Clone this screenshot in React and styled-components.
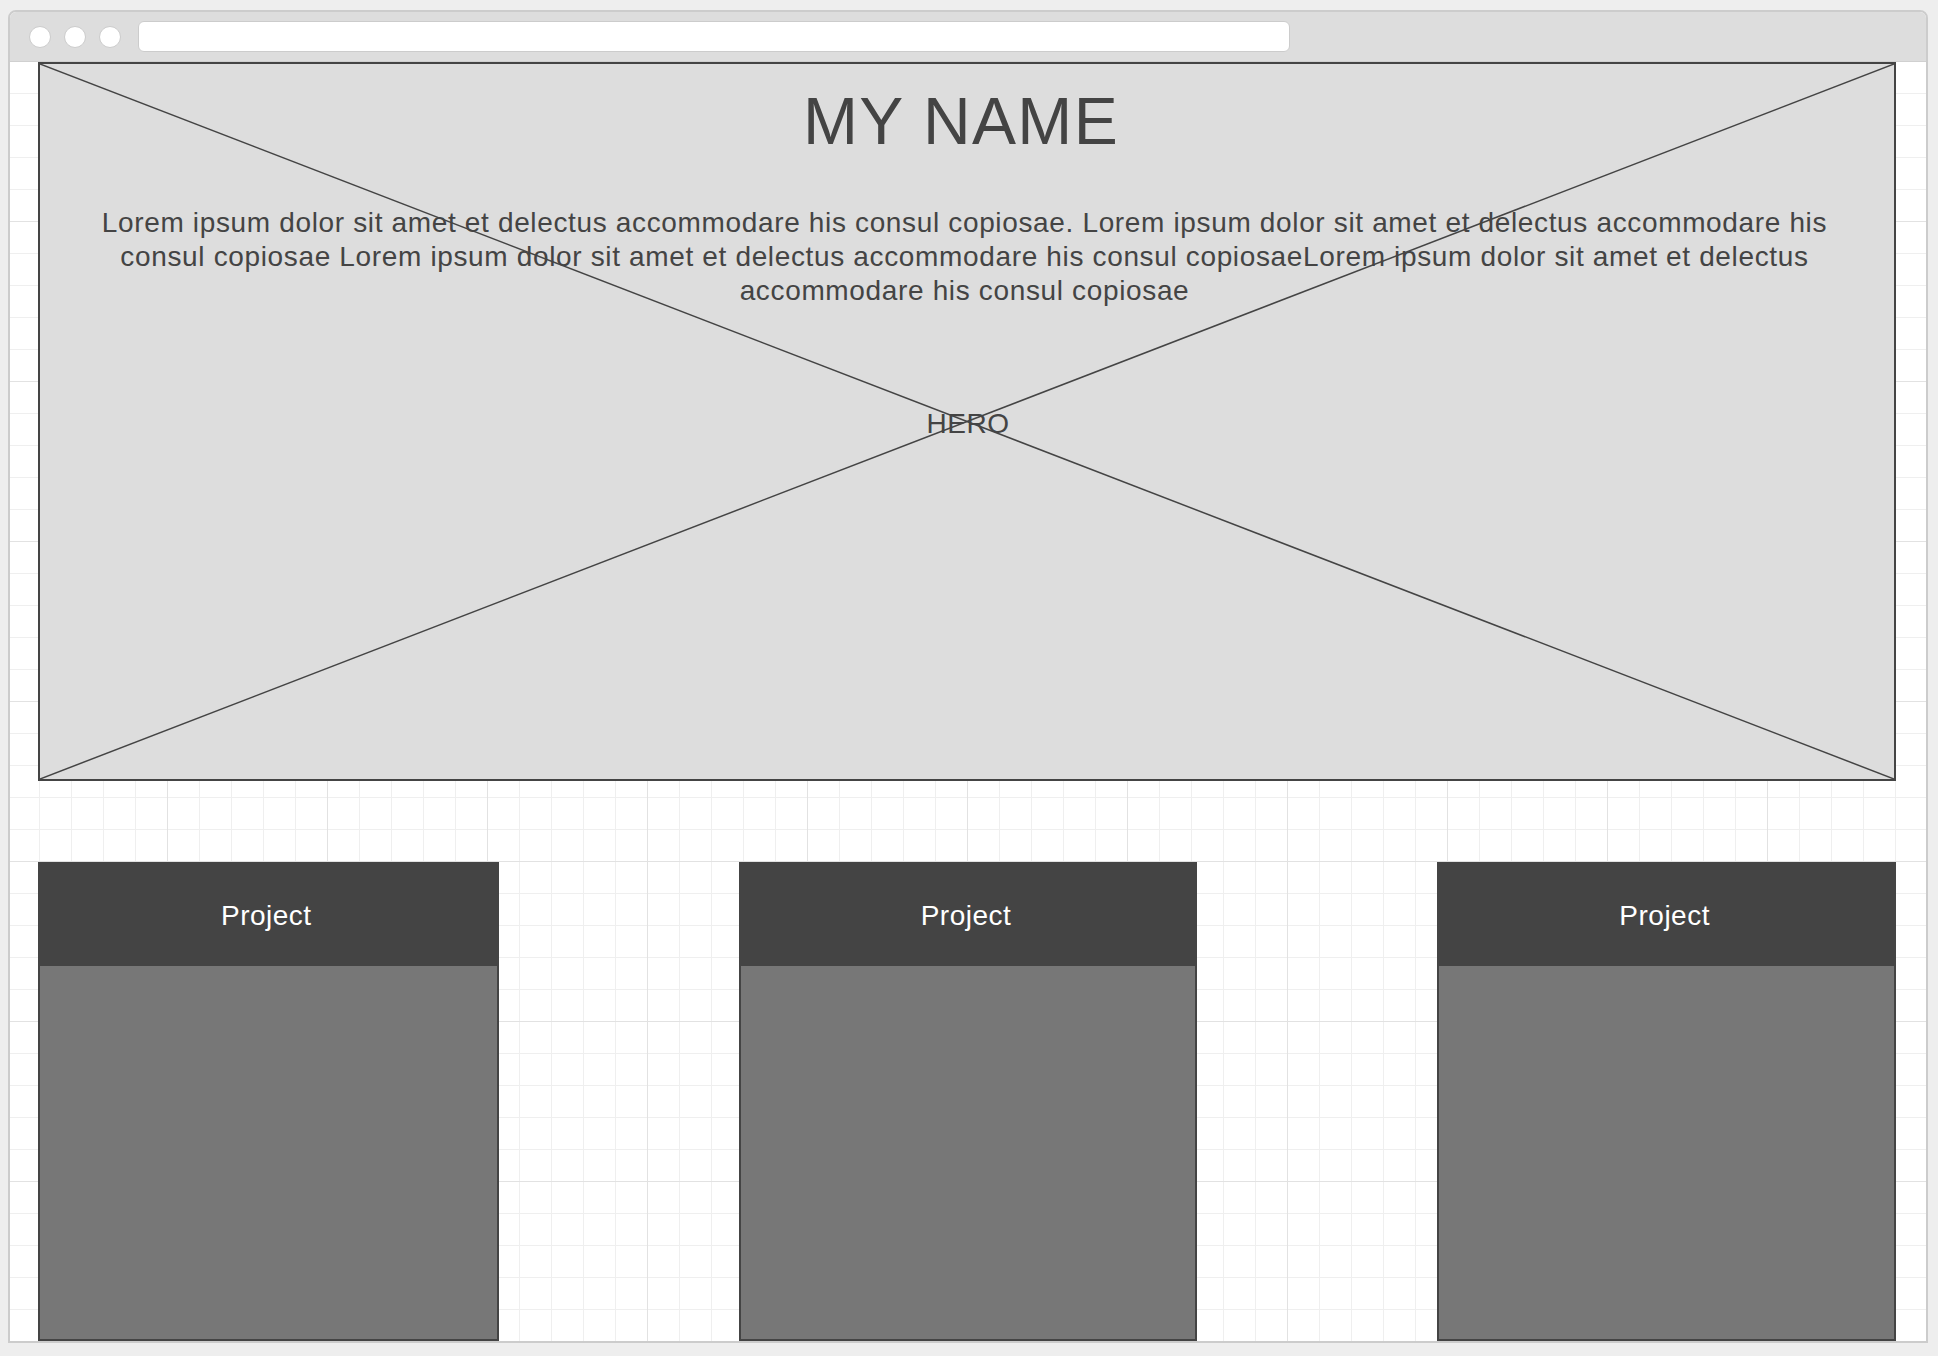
import React from "react";
import styled, { createGlobalStyle } from "styled-components";

const GlobalStyle = createGlobalStyle`
  html, body {
    margin: 0;
    padding: 0;
    background: #eeeeee;
  }
  * {
    box-sizing: border-box;
  }
`;

const Page = styled.div`
  width: 1938px;
  height: 1356px;
  padding: 10px 10px 0 8px;
  font-family: "Liberation Sans", Arial, sans-serif;
  color: #444444;
  overflow: hidden;
`;

const Window = styled.div`
  width: 1920px;
  height: 1333px;
  display: flex;
  flex-direction: column;
  border: 2px solid #cccccc;
  border-radius: 8px 8px 0 0;
  background: #ffffff;
  overflow: hidden;
`;

const TitleBar = styled.div`
  height: 50px;
  flex: none;
  display: flex;
  align-items: center;
  gap: 13px;
  padding: 0 19px;
  background: #dddddd;
  border-bottom: 1px solid #d0d0d0;
`;

const Dot = styled.span`
  width: 22px;
  height: 22px;
  border-radius: 50%;
  background: #ffffff;
  border: 1.5px solid #cccccc;
`;

const AddressBar = styled.div`
  width: 1152px;
  height: 31px;
  margin-left: 4px;
  background: #ffffff;
  border: 1.5px solid #cccccc;
  border-radius: 6px;
`;

const Content = styled.div`
  flex: 1;
  display: flex;
  flex-direction: column;
  padding: 0 30px 0 28px;
  background-color: #ffffff;
  background-image:
    linear-gradient(to right, transparent 157px, #e2e2e2 157px, #e2e2e2 158px, transparent 158px),
    linear-gradient(to bottom, transparent 159px, #e2e2e2 159px),
    linear-gradient(to right, transparent 29px, #efefef 29px, #efefef 30px, transparent 30px),
    linear-gradient(to bottom, transparent 31px, #efefef 31px);
  background-size: 160px 160px, 160px 160px, 32px 32px, 32px 32px;
`;

const Hero = styled.section`
  position: relative;
  height: 719px;
  flex: none;
  display: flex;
  flex-direction: column;
  align-items: center;
  padding: 20px 53px 0 48px;
  background: #dddddd;
  border: 2px solid #444444;
`;

const Cross = styled.svg`
  position: absolute;
  inset: 0;
  width: 100%;
  height: 100%;
`;

const Title = styled.h1`
  position: relative;
  margin: 0 7px 0 0;
  font-size: 66px;
  font-weight: 400;
  line-height: 1.15;
  letter-spacing: 1.3px;
  color: #444444;
`;

const Intro = styled.p`
  position: relative;
  margin: 46px 0 0;
  font-size: 28px;
  line-height: 34px;
  letter-spacing: 0.65px;
  text-align: center;
  color: #444444;
`;

const HeroLabel = styled.span`
  position: absolute;
  top: 50%;
  left: 50%;
  transform: translate(calc(-50% + 1px), calc(-50% + 2px));
  font-size: 28px;
  letter-spacing: 0.5px;
  color: #444444;
`;

const Projects = styled.div`
  flex: 1;
  display: flex;
  gap: 240px;
  margin-top: 81px;
`;

const Card = styled.article`
  width: ${({ $width }) => $width}px;
  display: flex;
  flex-direction: column;

  &:last-child {
    margin-left: auto;
  }
`;

const CardHead = styled.div`
  height: 104px;
  display: flex;
  align-items: center;
  justify-content: center;
  padding: 3px 4px 0 0;
  background: #444444;
  color: #ffffff;
  font-size: 28px;
  letter-spacing: 0.5px;
`;

const CardBody = styled.div`
  flex: 1;
  background: #777777;
  border: 2px solid #444444;
  border-top: none;
`;

const intro =
  "Lorem ipsum dolor sit amet et delectus accommodare his consul copiosae. Lorem ipsum dolor sit amet et delectus accommodare his consul copiosae Lorem ipsum dolor sit amet et delectus accommodare his consul copiosaeLorem ipsum dolor sit amet et delectus accommodare his consul copiosae";

const projects = [
  { name: "Project", width: 462 },
  { name: "Project", width: 460 },
  { name: "Project", width: 460 },
];

const App = () => {
  return (
    <Page>
      <GlobalStyle />
      <Window>
        <TitleBar>
          <Dot />
          <Dot />
          <Dot />
          <AddressBar />
        </TitleBar>
        <Content>
          <Hero>
            <Cross viewBox="0 0 100 100" preserveAspectRatio="none">
              <line x1="0" y1="0" x2="100" y2="100" stroke="#444" strokeWidth="1.5" vectorEffect="non-scaling-stroke" />
              <line x1="100" y1="0" x2="0" y2="100" stroke="#444" strokeWidth="1.5" vectorEffect="non-scaling-stroke" />
            </Cross>
            <Title>MY NAME</Title>
            <Intro>{intro}</Intro>
            <HeroLabel>HERO</HeroLabel>
          </Hero>
          <Projects>
            {projects.map((p, i) => (
              <Card key={i} $width={p.width}>
                <CardHead>{p.name}</CardHead>
                <CardBody />
              </Card>
            ))}
          </Projects>
        </Content>
      </Window>
    </Page>
  );
};

export default App;
